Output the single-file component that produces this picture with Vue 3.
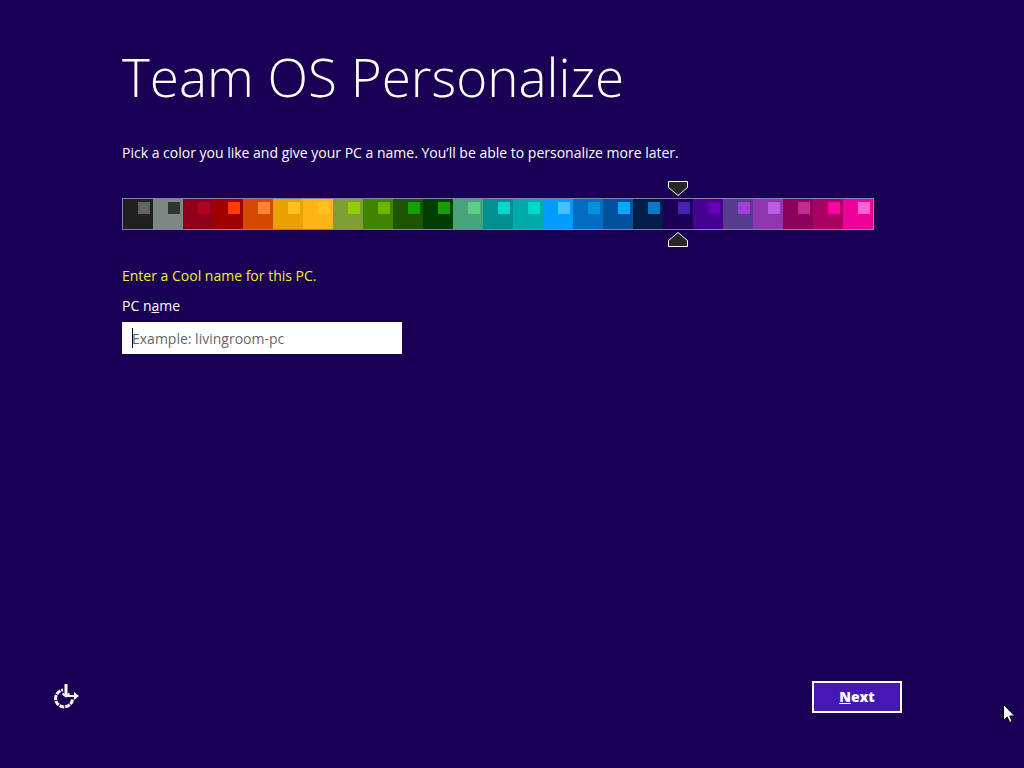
<script setup>
import { ref } from 'vue'

const schemes = [
  { name: 'Charcoal', base: '#202020', accent: '#606563' },
  { name: 'Gray', base: '#7d8783', accent: '#2e3634' },
  { name: 'Crimson', base: '#8f001d', accent: '#b30022' },
  { name: 'Red', base: '#a20000', accent: '#ff3c00' },
  { name: 'Rust', base: '#d34900', accent: '#ff8533' },
  { name: 'Amber', base: '#ec9f00', accent: '#ffc022' },
  { name: 'Gold', base: '#ffb315', accent: '#ffc220' },
  { name: 'Olive', base: '#7f9e36', accent: '#91d000' },
  { name: 'Green', base: '#3f8500', accent: '#72b300' },
  { name: 'Forest', base: '#1e5300', accent: '#12a400' },
  { name: 'Dark green', base: '#003e00', accent: '#16a000' },
  { name: 'Sea green', base: '#46a37c', accent: '#5cce86' },
  { name: 'Teal', base: '#008e91', accent: '#00d8cc' },
  { name: 'Turquoise', base: '#00aaa8', accent: '#00d8cc' },
  { name: 'Sky', base: '#009cff', accent: '#48c2ff' },
  { name: 'Blue', base: '#006cc0', accent: '#0090dc' },
  { name: 'Cobalt', base: '#00509e', accent: '#00a9ff' },
  { name: 'Navy', base: '#001c48', accent: '#0a78cc' },
  { name: 'Indigo', base: '#1a0057', accent: '#4820b4' },
  { name: 'Violet', base: '#480090', accent: '#6600b4' },
  { name: 'Slate purple', base: '#573d90', accent: '#a53ddb' },
  { name: 'Purple', base: '#8f36b0', accent: '#bc5ce4' },
  { name: 'Plum', base: '#8c005e', accent: '#c62a90' },
  { name: 'Raspberry', base: '#ab0062', accent: '#ff00a8' },
  { name: 'Magenta', base: '#ee009a', accent: '#ff62d4' },
]

const selected = ref('Indigo')
const pcName = ref('')
</script>

<template>
  <div class="screen">
    <form class="content" @submit.prevent>
      <h1>Team OS Personalize</h1>
      <p class="intro">Pick a color you like and give your PC a name. You’ll be able to personalize more later.</p>

      <div class="palette" role="radiogroup" aria-label="Color scheme">
        <label
          v-for="s in schemes"
          :key="s.name"
          class="swatch"
          :style="{ backgroundColor: s.base }"
        >
          <input v-model="selected" type="radio" name="scheme" :value="s.name" :aria-label="s.name" />
          <span class="accent" :style="{ backgroundColor: s.accent }"></span>
          <template v-if="selected === s.name">
            <svg class="marker top" viewBox="0 0 20 15" aria-hidden="true">
              <path d="M.5.5h19v6L10 14.5.5 6.500z" />
            </svg>
            <svg class="marker bottom" viewBox="0 0 20 15" aria-hidden="true">
              <path d="M.5 14.500h19v-6L10 .5.5 8.500z" />
            </svg>
          </template>
        </label>
      </div>

      <p class="hint">Enter a Cool name for this PC.</p>
      <label class="field-label" for="pc-name">PC n<u>a</u>me</label>
      <div class="field">
        <input id="pc-name" v-model="pcName" type="text" placeholder="Example: livingroom-pc" />
        <span v-if="!pcName" class="caret"></span>
      </div>
    </form>

    <footer>
      <button class="access" type="button" aria-label="Ease of access">
        <svg viewBox="0 0 26 26" aria-hidden="true">
          <path class="ring" d="M19.500 15.500A8.500 8.500 0 1 1 10 6" />
          <path class="stem" d="M13 0v12" />
          <path class="arrow" d="M9.500 9.500l3.500 3 3.500-3M13 12h11" />
          <path class="head" d="M21 8l5 4-5 4z" />
        </svg>
      </button>
      <button class="next" type="button"><u>N</u>ext</button>
    </footer>

    <svg class="pointer" viewBox="0 0 12 19" aria-hidden="true">
      <path d="M.5.5v16l3.700-3.500 2.500 5.500 2.500-1-2.500-5.500h5z" />
    </svg>
  </div>
</template>

<style>
body {
  margin: 0;
  background: #1a0055;
}
</style>

<style scoped>
.screen {
  position: relative;
  display: flex;
  flex-direction: column;
  justify-content: space-between;
  box-sizing: border-box;
  min-height: 100vh;
  padding: 40px 0 55px;
  color: #fff;
  background: #1a0055;
  font-family: "Open Sans", "Noto Sans", sans-serif;
  font-size: 14px;
  line-height: 20px;
}

.content {
  padding: 0 150px 0 122px;
}

h1 {
  margin: 0;
  font-size: 53px;
  font-weight: 300;
  line-height: 74px;
}

.intro {
  margin: 29px 0 35px;
}

.palette {
  display: flex;
  height: 30px;
  border: 1px solid #8580ae;
}

.swatch {
  position: relative;
  display: flex;
  flex: 1;
  justify-content: flex-end;
  align-items: flex-start;
  padding: 3px;
}

.swatch input {
  position: absolute;
  inset: 0;
  width: 100%;
  height: 100%;
  margin: 0;
  opacity: 0;
}

.accent {
  width: 12px;
  height: 12px;
}

.marker {
  position: absolute;
  left: 50%;
  width: 20px;
  height: 15px;
  margin-left: -10px;
  fill: #262626;
  stroke: #fff;
}

.marker.top {
  bottom: 33px;
}

.marker.bottom {
  top: 33px;
}

.hint {
  margin: 36px 0 10px;
  color: #f0ee3c;
}

.field-label {
  display: block;
  margin-bottom: 6px;
}

u {
  text-underline-offset: 1px;
}

.field {
  position: relative;
  max-width: 280px;
}

.field input {
  box-sizing: border-box;
  display: block;
  width: 100%;
  height: 32px;
  padding: 0 10px;
  border: 0;
  outline: 0;
  background: #fff;
  color: #000;
  font: inherit;
}

.field input::placeholder {
  color: #666;
  opacity: 1;
}

.caret {
  position: absolute;
  top: 6px;
  left: 10px;
  width: 1px;
  height: 20px;
  background: #000;
}

footer {
  display: flex;
  justify-content: space-between;
  align-items: center;
  padding: 0 122px 0 53px;
}

button {
  color: #fff;
  font: inherit;
}

.access {
  width: 26px;
  height: 26px;
  padding: 0;
  border: 0;
  background: none;
}

.access svg {
  display: block;
  fill: none;
  stroke: #fff;
}

.ring {
  stroke-width: 3;
  stroke-dasharray: 5 1;
}

.stem {
  stroke-width: 3;
}

.arrow {
  stroke-width: 2;
}

.head {
  fill: #fff;
  stroke: none;
}

.next {
  width: 90px;
  height: 32px;
  padding: 0;
  border: 2px solid #fff;
  background: #4617b4;
  font-weight: 800;
}

.pointer {
  position: absolute;
  right: 9px;
  bottom: 45px;
  width: 12px;
  height: 19px;
  fill: #fff;
  stroke: #000;
  stroke-width: 1;
}
</style>
